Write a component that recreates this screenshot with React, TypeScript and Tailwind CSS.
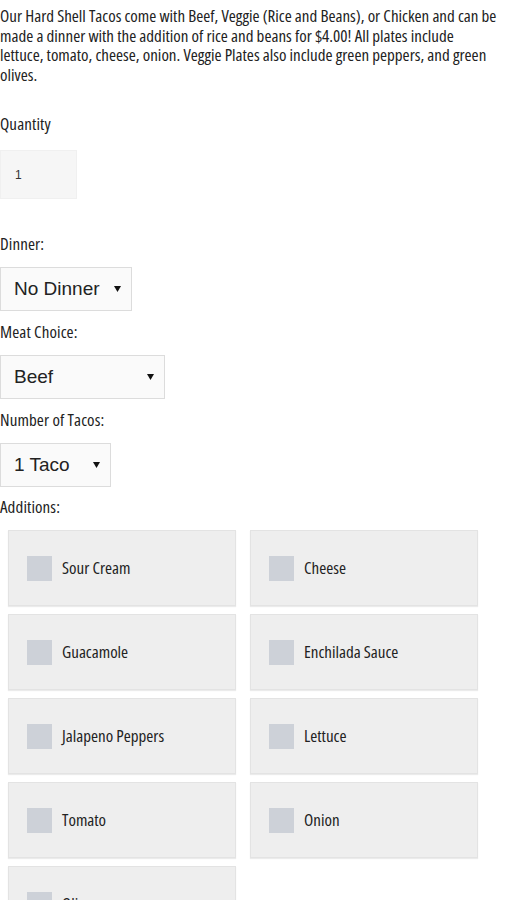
import React from "react";

const condensed = "font-['Open_Sans','Noto_Sans',sans-serif] font-stretch-condensed";
const arial = "font-['Liberation_Sans',Arial,sans-serif] font-stretch-normal";

const Label = ({ children, className = "" }: { children: React.ReactNode; className?: string }) => (
    <div className={`text-[17px] leading-[20px] tracking-[0.1px] text-[#222] ${className}`}>{children}</div>
);

const Select = ({ value, width }: { value: string; width: string }) => (
    <div className={`flex items-center justify-between h-[44px] ${width} border border-[#dcdcdc] bg-[#fafafa] pl-[13px] pr-[10px] ${arial} text-[19px] text-[#222]`}>
        <span>{value}</span>
        <svg width="7" height="6" viewBox="0 0 7 6"><path d="M0 0h7L3.5 6z" fill="#111" /></svg>
    </div>
);

const additions = [
    "Sour Cream", "Cheese",
    "Guacamole", "Enchilada Sauce",
    "Jalapeno Peppers", "Lettuce",
    "Tomato", "Onion",
    "Olives",
];

export default function App() {
    return (
        <div className={`relative w-[506px] h-[900px] overflow-hidden bg-white ${condensed}`}>
            {/* Description */}
            <p className="pt-[6px] text-[17px] leading-[19.5px] text-[#222]">
                Our Hard Shell Tacos come with Beef, Veggie (Rice and Beans), or Chicken and can be<br />
                made a dinner with the addition of rice and beans for $4.00! All plates include<br />
                lettuce, tomato, cheese, onion. Veggie Plates also include green peppers, and green<br />
                olives.
            </p>

            <Label className="mt-[30px]">Quantity</Label>
            <div className={`mt-[16px] flex items-center w-[77px] h-[49px] bg-[#f6f6f6] border border-[#f0f0f0] pl-[14px] ${arial} text-[12px] text-[#333]`}>1</div>

            <Label className="mt-[35px]">Dinner:</Label>
            <div className="mt-[13px]"><Select value="No Dinner" width="w-[132px]" /></div>

            <Label className="mt-[11px]">Meat Choice:</Label>
            <div className="mt-[13px]"><Select value="Beef" width="w-[165px]" /></div>

            <Label className="mt-[11px]">Number of Tacos:</Label>
            <div className="mt-[13px]"><Select value="1 Taco" width="w-[111px]" /></div>

            <Label className="mt-[10px]">Additions:</Label>

            {/* Additions grid */}
            <div className="mt-[13px] grid grid-cols-[228px_228px] gap-x-[14px] gap-y-[8px] pl-[8px]">
                {additions.map((name) => (
                    <div key={name} className="flex items-center h-[76px] bg-[#eeeeee] border border-[#e3e3e3] shadow-[0_1px_1px_rgba(0,0,0,0.08)] pl-[18px]">
                        <span className="w-[25px] h-[25px] bg-[#cdd1d8]" />
                        <span className="ml-[10px] text-[17px] text-[#222]">{name}</span>
                    </div>
                ))}
            </div>
        </div>
    );
}
